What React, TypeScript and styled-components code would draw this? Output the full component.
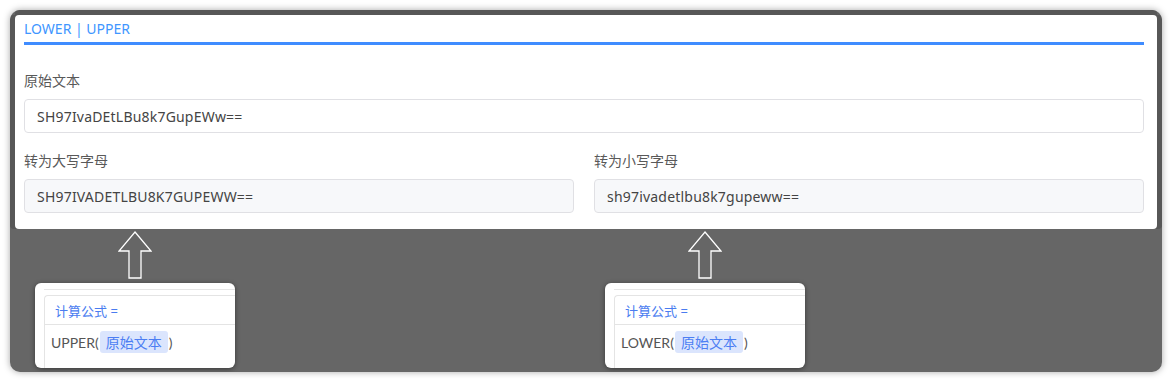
import styled, { createGlobalStyle } from "styled-components"

const GlobalStyle = createGlobalStyle`
  html, body {
    margin: 0;
    padding: 0;
    background: #ffffff;
  }
  body {
    font-family: "Noto Sans", "Noto Sans CJK SC", sans-serif;
  }
`

const Frame = styled.div`
  box-sizing: border-box;
  margin: 10px;
  width: 1152px;
  height: 362px;
  padding: 5px;
  border-radius: 10px;
  background: #666666;
  box-shadow: 0 0 7px rgba(0, 0, 0, 0.35);
  overflow: hidden;
`

const Card = styled.div`
  background: #ffffff;
  border-radius: 4px;
  padding: 4px 13px 16px 9px;
  box-shadow: 0 -5px 0 0 #575757, -5px 0 0 0 #575757, 5px 0 0 0 #575757;
`

const Title = styled.div`
  font-size: 14px;
  line-height: 20px;
  color: #4096ff;
  padding-bottom: 3px;
  border-bottom: 3px solid #3f8cff;
`

const Form = styled.div`
  display: grid;
  grid-template-columns: 1fr 1fr;
  column-gap: 20px;
  row-gap: 18px;
  padding-top: 26px;
`

const Field = styled.div<{ $wide?: boolean }>`
  display: flex;
  flex-direction: column;
  gap: 8px;
  grid-column: ${p => (p.$wide ? "1 / span 2" : "auto")};
`

const Label = styled.div`
  font-size: 14px;
  line-height: 20px;
  color: #595959;
`

const Input = styled.div<{ $disabled?: boolean }>`
  box-sizing: border-box;
  height: 34px;
  padding: 0 12px;
  display: flex;
  align-items: center;
  font-size: 14px;
  letter-spacing: 0.2px;
  color: #444444;
  border: 1px solid #e0e0e4;
  border-radius: 4px;
  background: ${p => (p.$disabled ? "#f7f8fa" : "#ffffff")};
`

const Below = styled.div`
  display: grid;
  grid-template-columns: 550px 550px;
  column-gap: 20px;
  padding: 2px 0 0 20px;
`

const Group = styled.div`
  width: 200px;
  display: flex;
  flex-direction: column;
  align-items: center;
  gap: 4px;
`

const Arrow = styled.svg`
  display: block;
`

const FormulaCard = styled.div`
  box-sizing: border-box;
  width: 200px;
  height: 85px;
  background: #ffffff;
  border-radius: 6px;
  box-shadow: 0 1px 5px rgba(0, 0, 0, 0.45);
  overflow: hidden;
  padding: 6px 0 0 9px;
`

const TopRule = styled.div`
  border-top: 1px solid #e6e6e6;
  height: 5px;
`

const Editor = styled.div`
  width: 280px;
  height: 100px;
  border: 1px solid #e4e4e4;
  border-right: none;
  border-radius: 4px 0 0 0;
`

const EditorHead = styled.div`
  height: 28px;
  display: flex;
  align-items: center;
  padding-left: 10px;
  font-size: 13px;
  color: #4a7cf0;
  border-bottom: 1px solid #e4e4e4;
`

const EditorBody = styled.div`
  display: flex;
  align-items: center;
  padding: 6px 0 0 6px;
  font-family: Lato, "Noto Sans CJK SC", sans-serif;
  font-size: 14px;
  color: #555555;
`

const Chip = styled.span`
  display: inline-flex;
  align-items: center;
  height: 22px;
  padding: 0 6px;
  margin: 0 1px;
  border-radius: 3px;
  background: #dbe5fd;
  color: #4c7ef3;
  font-family: "Noto Sans CJK SC", sans-serif;
  font-size: 14px;
`

function UpArrow() {
  return (
    <Arrow width="34" height="48" viewBox="0 0 34 48">
      <polygon
        points="17,1 33,20 23,20 23,47 11,47 11,20 1,20"
        fill="none"
        stroke="#ffffff"
        strokeWidth="1.3"
      />
    </Arrow>
  )
}

function Formula({ fn }: { fn: string }) {
  return (
    <Group>
      <UpArrow />
      <FormulaCard>
        <TopRule />
        <Editor>
          <EditorHead>计算公式 =</EditorHead>
          <EditorBody>
            {fn}(<Chip>原始文本</Chip>)
          </EditorBody>
        </Editor>
      </FormulaCard>
    </Group>
  )
}

export default function App() {
  const source = "SH97IvaDEtLBu8k7GupEWw=="
  return (
    <>
      <GlobalStyle />
      <Frame>
        <Card>
          <Title>LOWER | UPPER</Title>
          <Form>
            <Field $wide>
              <Label>原始文本</Label>
              <Input>{source}</Input>
            </Field>
            <Field>
              <Label>转为大写字母</Label>
              <Input $disabled>{source.toUpperCase()}</Input>
            </Field>
            <Field>
              <Label>转为小写字母</Label>
              <Input $disabled>{source.toLowerCase()}</Input>
            </Field>
          </Form>
        </Card>
        <Below>
          <Formula fn="UPPER" />
          <Formula fn="LOWER" />
        </Below>
      </Frame>
    </>
  )
}
